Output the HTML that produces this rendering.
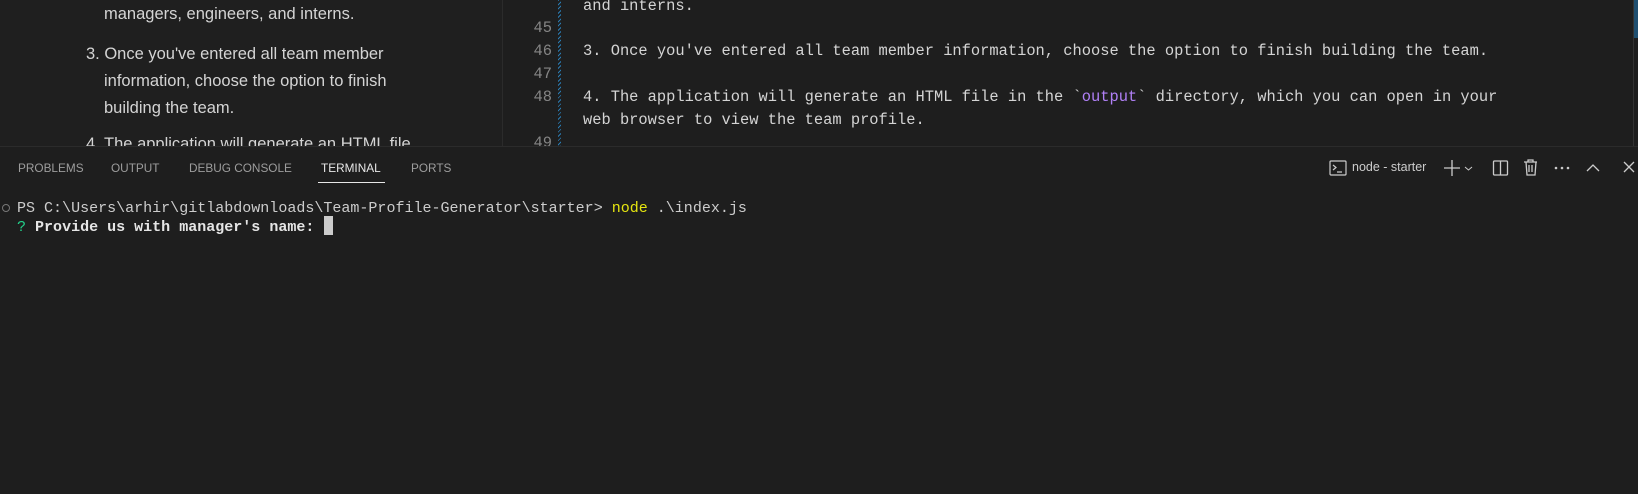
<!DOCTYPE html>
<html><head><meta charset="utf-8"><style>
*{margin:0;padding:0;box-sizing:border-box}
body{width:1638px;height:494px;background:#1e1e1e;position:relative;overflow:hidden;font-family:"Liberation Sans",sans-serif;color:#ccc}
.a{position:absolute;white-space:pre}
.md{font-size:16.5px;color:#d4d4d4}
.mono{font-family:"Liberation Mono",monospace;font-size:15.4px}
.tm{font-family:"Liberation Mono",monospace;font-size:15.03px}
.ln{color:#858585;width:40px;text-align:right;left:512px}
.code{left:583px;color:#d4d4d4}
.tab{font-size:11.8px;color:#9d9d9d;top:161px}
</style></head><body>
<div class="a" style="left:0;top:0;width:502px;height:146px;background:#1f1f1f"></div>
<div class="a" style="left:502px;top:0;width:1px;height:146px;background:#2b2b2b"></div>
<div class="md a" style="left:104px;top:5px">managers, engineers, and interns.</div>
<div class="md a" style="left:86px;top:45px">3. Once you've entered all team member</div>
<div class="md a" style="left:104px;top:72px">information, choose the option to finish</div>
<div class="md a" style="left:104px;top:99px">building the team.</div>
<div class="md a" style="left:86px;top:135px;height:11px;overflow:hidden">4. The application will generate an HTML file</div>
<div class="a" style="left:558px;top:0;width:3px;height:146px;background:repeating-linear-gradient(135deg,#2a7ab0 0 1px,#1e1e1e 1px 3px)"></div>
<div class="mono a code" style="top:-3px">and interns.</div>
<div class="mono a ln" style="top:19px">45</div>
<div class="mono a ln" style="top:42px">46</div>
<div class="mono a code" style="top:42px">3. Once you've entered all team member information, choose the option to finish building the team.</div>
<div class="mono a ln" style="top:65px">47</div>
<div class="mono a ln" style="top:88px">48</div>
<div class="mono a code" style="top:88px">4. The application will generate an HTML file in the `<span style="color:#b180f7">output</span>` directory, which you can open in your</div>
<div class="mono a code" style="top:111px">web browser to view the team profile.</div>
<div class="mono a ln" style="top:134px;height:12px;overflow:hidden">49</div>
<div class="a" style="left:1633px;top:0;width:1px;height:146px;background:#333"></div>
<div class="a" style="left:1634px;top:0;width:4px;height:38px;background:#1f4f70"></div>
<div class="a" style="left:0;top:146px;width:1638px;height:1px;background:#2b2b2b"></div>
<div class="a tab" style="left:18px">PROBLEMS</div>
<div class="a tab" style="left:111px">OUTPUT</div>
<div class="a tab" style="left:189px">DEBUG CONSOLE</div>
<div class="a tab" style="left:321px;color:#e7e7e7">TERMINAL</div>
<div class="a" style="left:318px;top:182px;width:67px;height:1px;background:#e7e7e7"></div>
<div class="a tab" style="left:411px">PORTS</div>
<svg class="a" style="left:1328px;top:158px" width="20" height="20" viewBox="0 0 20 20" fill="none" stroke="#ccc" stroke-width="1.2"><rect x="2" y="3" width="16" height="14" rx="1"/><path d="M5 7l3 2.5-3 2.5M9 14h5"/></svg>
<div class="a" style="left:1352px;top:160px;font-size:12.5px;color:#ccc">node - starter</div>
<svg class="a" style="left:1440px;top:158px" width="40" height="20" fill="none" stroke="#ccc" stroke-width="1.3"><path d="M4 10h16M12 2v16"/><path d="M25 9l3.5 3 3.5-3" stroke-width="1"/></svg>
<svg class="a" style="left:1491px;top:158px" width="20" height="20" fill="none" stroke="#ccc" stroke-width="1.3"><rect x="2.5" y="3" width="14" height="14" rx="1"/><path d="M9.5 3v14"/></svg>
<svg class="a" style="left:1521px;top:157px" width="20" height="22" fill="none" stroke="#ccc" stroke-width="1.3"><path d="M3 5h13M7 5V3h5v2M5 5l1 13h8l1-13M8 8v7M11 8v7"/></svg>
<svg class="a" style="left:1553px;top:158px" width="20" height="20" fill="#ccc"><circle cx="3" cy="10" r="1.3"/><circle cx="9" cy="10" r="1.3"/><circle cx="15" cy="10" r="1.3"/></svg>
<svg class="a" style="left:1584px;top:158px" width="20" height="20" fill="none" stroke="#ccc" stroke-width="1.3"><path d="M3 13l6-6 6 6"/></svg>
<svg class="a" style="left:1620px;top:158px" width="18" height="20" fill="none" stroke="#ccc" stroke-width="1.3"><path d="M4 4l10 10M14 4L4 14"/></svg>
<div class="a" style="left:2px;top:204px;width:8px;height:8px;border:1.5px solid #777;border-radius:50%"></div>
<div class="tm a" style="left:17px;top:199px;color:#ccc">PS C:\Users\arhir\gitlabdownloads\Team-Profile-Generator\starter&gt; <span style="color:#e5e510">node</span> .\index.js</div>
<div class="tm a" style="left:17px;top:218px;color:#ccc"><span style="color:#23d18b">?</span> <b style="color:#e5e5e5">Provide us with manager's name:</b> </div>
<div class="a" style="left:324px;top:216px;width:9px;height:19px;background:#cccccc"></div>
</body></html>
